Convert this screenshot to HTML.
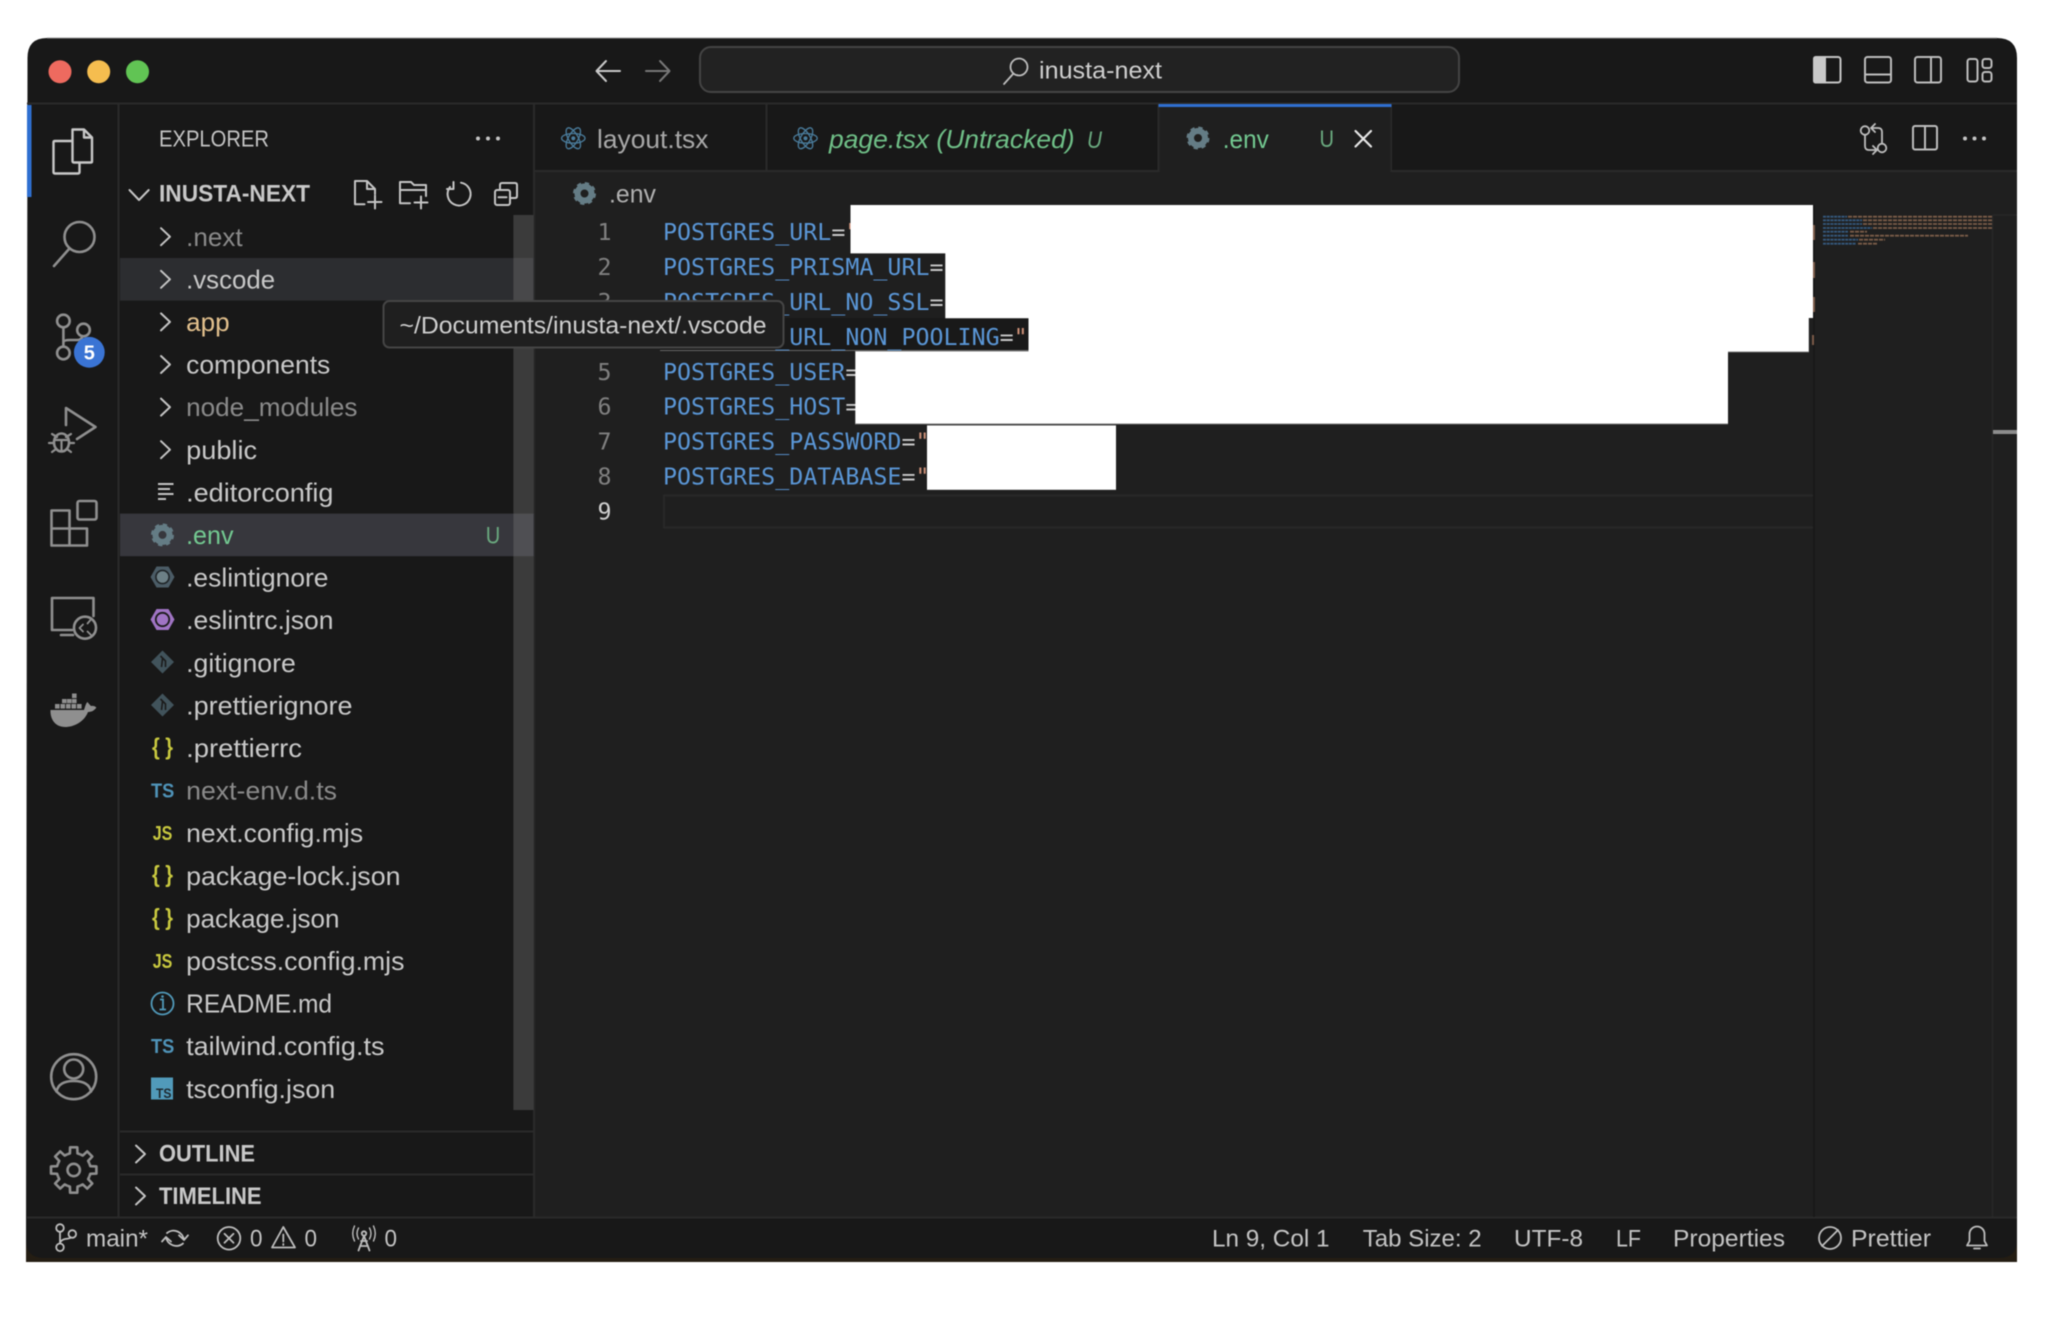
<!DOCTYPE html>
<html><head><meta charset="utf-8"><title>inusta-next</title>
<style>
html,body{margin:0;padding:0;background:#fff;width:2048px;height:1327px;overflow:hidden}
svg{display:block;filter:blur(.45px)}
text{font-family:"Liberation Sans",sans-serif;font-size:26px;fill:#c8c8c8}
.m{font-family:"DejaVu Sans Mono","Liberation Mono",monospace;font-size:23.3px;fill:#5a96d6}
.eq{fill:#c8c8c8}.q{fill:#ce9178}
.n{font-family:"DejaVu Sans Mono","Liberation Mono",monospace;font-size:23.3px;fill:#808080;text-anchor:end}
.d{fill:#8a8a8a}
.s{font-size:24.5px;fill:#c4c4c4}
.b{font-weight:700;font-size:24px;fill:#c8c8c8}
.ic{fill:none;stroke:#8f8f8f;stroke-width:2.6;stroke-linecap:round;stroke-linejoin:round}
.ib{fill:none;stroke:#c4c4c4;stroke-width:2;stroke-linecap:round;stroke-linejoin:round}
.ws{fill:none;stroke:#bdbdbd;stroke-width:1.8;stroke-linecap:round;stroke-linejoin:round}
.t{font-weight:700;font-size:20.5px;fill:#4f93b8}
.j{font-weight:700;font-size:20.5px;fill:#c8c83f}
.br{font-family:"Liberation Sans",sans-serif;font-weight:700;font-size:23px;fill:#c8c83f}
</style></head><body>
<svg width="2048" height="1327" viewBox="0 0 2048 1327" xmlns="http://www.w3.org/2000/svg">
<defs>
<g id="chev"><path d="M-4.5 -8.5L4.5 0L-4.5 8.5" fill="none" stroke="#c4c4c4" stroke-width="2" stroke-linecap="round" stroke-linejoin="round"/></g>
<g id="gear"><circle r="7" fill="none" stroke="#647c85" stroke-width="6"/><circle r="10" fill="none" stroke="#647c85" stroke-width="3" stroke-dasharray="4.2 3.65"/></g>
<g id="atom" fill="none" stroke="#4a7c9c" stroke-width="1.35"><ellipse rx="11.7" ry="4.8"/><ellipse rx="11.7" ry="4.8" transform="rotate(60)"/><ellipse rx="11.7" ry="4.8" transform="rotate(120)"/><circle r="1.4" fill="#4a7c9c"/></g>
<g id="diam"><path d="M0 -11.5L11.5 0L0 11.5L-11.5 0Z" fill="#41535b"/><path d="M-2 -6L3 -1V5M0 -3.4L-1 5" stroke="#1b1b1b" stroke-width="1.6" fill="none"/></g>
<g id="tooth"><path d="M-6.5 -15.7L-3.8 -16.6L-3.6 -22.7L3.6 -22.7L3.8 -16.6L6.5 -15.7" fill="none" stroke="#8f8f8f" stroke-width="2.6" stroke-linejoin="round"/></g>
<g id="brace"><text class="br" x="-10.5" y="6.5" textLength="21" lengthAdjust="spacingAndGlyphs">{ }</text></g>
</defs>

<rect width="2048" height="1327" fill="#fff"/>
<rect x="26" y="1235" width="1991" height="27" fill="#241d13"/>
<path d="M27.5 58Q27.5 38 47 38H1997Q2017 38 2017 58V1240Q2017 1258 1999 1258H44Q26 1258 26 1240Z" fill="#181818"/>
<path d="M47 38H1997" stroke="#9a9a9a" stroke-width="1"/>

<rect x="535" y="172" width="1482" height="1045" fill="#1f1f1f"/>

<path d="M27 103.5H2017M118.5 104V1217M534 104V1217M27 1217.5H2017" stroke="#2a2a2a" stroke-width="2" fill="none"/>
<path d="M535 171H1158M1391 171H2017" stroke="#2a2a2a" stroke-width="2"/>
<path d="M766.5 104V171M1158.5 104V172M1391 104V172" stroke="#2a2a2a" stroke-width="2"/>

<circle cx="60" cy="71.7" r="11.5" fill="#ee6a5f"/>
<circle cx="98.7" cy="71.7" r="11.5" fill="#f5bd4f"/>
<circle cx="137.5" cy="71.7" r="11.5" fill="#61c454"/>

<path d="M620 71H597M606 61L596.5 71L606 81" fill="none" stroke="#c8c8c8" stroke-width="2" stroke-linecap="round" stroke-linejoin="round"/>
<path d="M646 71H669M660 61L669.5 71L660 81" fill="none" stroke="#777" stroke-width="2" stroke-linecap="round" stroke-linejoin="round"/>

<rect x="700" y="47" width="759" height="45" rx="11" fill="#222" stroke="#444" stroke-width="2"/>
<circle cx="1019" cy="67" r="8.5" fill="none" stroke="#bdbdbd" stroke-width="1.8"/>
<path d="M1013 74L1004 84" stroke="#bdbdbd" stroke-width="1.8" stroke-linecap="round"/>
<text class="s" x="1039" y="78.5" textLength="123" lengthAdjust="spacingAndGlyphs" style="fill:#cfcfcf">inusta-next</text>

<rect x="1814" y="57" width="26.5" height="25.5" rx="2.5" fill="none" stroke="#c4c4c4" stroke-width="2"/>
<path d="M1816 56H1826V83.5H1816Q1813 83.5 1813 80.5V59Q1813 56 1816 56Z" fill="#c8c8c8"/>
<rect x="1865" y="57" width="26" height="25.5" rx="2.5" fill="none" stroke="#bdbdbd" stroke-width="2"/>
<path d="M1865 74.5H1891" stroke="#bdbdbd" stroke-width="2"/>
<rect x="1915" y="57" width="26" height="25.5" rx="2.5" fill="none" stroke="#bdbdbd" stroke-width="2"/>
<path d="M1931 57V82.5" stroke="#bdbdbd" stroke-width="2"/>
<rect x="1967.5" y="59" width="10" height="22.5" rx="2.5" fill="none" stroke="#bdbdbd" stroke-width="2"/>
<rect x="1982.5" y="59" width="9" height="9" rx="2.5" fill="none" stroke="#bdbdbd" stroke-width="2"/>
<rect x="1982.5" y="72" width="9" height="9.5" rx="2.5" fill="none" stroke="#bdbdbd" stroke-width="2"/>

<rect x="27" y="105" width="4.5" height="92" fill="#2f6fd0"/>
<path d="M72.5 129.5H84L92 137.5V161.5Q92 162.5 91 162.5H74Q72.5 162.5 72.5 161V129.5ZM84 129.5V137.5H92" fill="none" stroke="#c8c8c8" stroke-width="2.4" stroke-linejoin="round"/>
<path d="M72.5 141H55Q53.5 141 53.5 142.5V172Q53.5 173.5 55 173.5H78Q79.5 173.5 79.5 172V162.5" fill="none" stroke="#c8c8c8" stroke-width="2.4" stroke-linejoin="round"/>
<circle cx="79.5" cy="237" r="15" class="ic"/>
<path d="M69 249L54 266" class="ic"/>
<circle cx="63.4" cy="321" r="6.3" class="ic"/>
<circle cx="83.5" cy="330" r="6.3" class="ic"/>
<circle cx="63.4" cy="353" r="6.3" class="ic"/>
<path d="M63.4 327.5V346.5M63.4 342Q64 340 70 340H78Q81 340 82.5 336.5" class="ic"/>
<circle cx="89.3" cy="352.3" r="15.4" fill="#3a74d4"/>
<text x="89.3" y="359.5" text-anchor="middle" style="font-size:20px;font-weight:700;fill:#fff">5</text>
<path d="M66 425V408L95.5 427L77 439" class="ic"/>
<ellipse cx="61.5" cy="442.5" rx="7.5" ry="9" class="ic"/>
<path d="M52 434L57 437M71 434L66 437M49 443H54M74 443H69M52 452L56 449M71 452L67 449M54.5 440H68.5M61.5 440V451" class="ic" style="stroke-width:2.2"/>
<path d="M51.5 528.5H69.5V545.5H51.5V510.5H69.5V528.5H87V545.5H69.5" class="ic"/>
<rect x="77.5" y="501" width="19" height="18.5" rx="2" class="ic"/>
<path d="M72 630H52V598H93.5V616" class="ic"/>
<path d="M61 635H73" class="ic"/>
<circle cx="85" cy="627.7" r="11" class="ic"/>
<path d="M83 624.5L79.5 628L83 631.5M87.5 623.5L90.5 620M87.5 631.5L91 635" class="ic" style="stroke-width:1.8"/>
<g fill="#8f8f8f">
<path d="M50.5 710H84C85 707 86 703 87.5 702C89 704 90 705 91 706C93 705.5 95 706 96.4 707.5C94 711 91 712 88 712C84 722 74 727 65 727C56 727 50 720 50.5 710Z"/>
<rect x="72" y="693.5" width="4.6" height="4.6"/>
<rect x="62" y="699" width="4.6" height="4.2"/><rect x="67" y="699" width="4.6" height="4.2"/><rect x="72" y="699" width="4.6" height="4.2"/>
<rect x="55" y="704" width="4.6" height="4.6"/><rect x="60.5" y="704" width="4.6" height="4.6"/><rect x="66" y="704" width="4.6" height="4.6"/><rect x="71.5" y="704" width="4.6" height="4.6"/><rect x="77" y="704" width="4.6" height="4.6"/>
</g>
<circle cx="73.7" cy="1076.7" r="22.5" class="ic"/>
<circle cx="73.7" cy="1069" r="9.5" class="ic"/>
<path d="M56.5 1091.5C58 1084 64 1081 73.7 1081C83.5 1081 89.5 1084 91 1091.5" class="ic"/>
<g transform="translate(73.7 1170)">
<use href="#tooth"/><use href="#tooth" transform="rotate(45)"/><use href="#tooth" transform="rotate(90)"/><use href="#tooth" transform="rotate(135)"/><use href="#tooth" transform="rotate(180)"/><use href="#tooth" transform="rotate(225)"/><use href="#tooth" transform="rotate(270)"/><use href="#tooth" transform="rotate(315)"/>
<circle r="6.2" class="ic"/>
</g>

<text x="159" y="146.7" textLength="110" lengthAdjust="spacingAndGlyphs" style="font-size:23.5px;fill:#c4c4c4">EXPLORER</text>
<g fill="#c4c4c4"><circle cx="478" cy="138.5" r="2"/><circle cx="488" cy="138.5" r="2"/><circle cx="498" cy="138.5" r="2"/></g>
<path d="M129.5 190L139 200L148.7 190" fill="none" stroke="#c4c4c4" stroke-width="2" stroke-linecap="round" stroke-linejoin="round"/>
<text class="b" x="159" y="201.7" textLength="151" lengthAdjust="spacingAndGlyphs">INUSTA-NEXT</text>
<!-- new file -->
<path d="M364.5 204.3H355V181H367L375 189V194M367 181V189H375M375 195.5V208.5M368 202H381.5" class="ib"/>
<!-- new folder -->
<path d="M410 203.3H400V182H411L414 185H426V196M400 190H426M421 196.5V208.5M414.5 202.5H427.5" class="ib"/>
<!-- refresh -->
<path d="M461 182.7A11.5 11.5 0 1 1 450 187M453.5 182V189H447" class="ib"/>
<!-- collapse -->
<rect x="495" y="190" width="15" height="15" rx="2" class="ib"/>
<path d="M500 190V185Q500 183 502 183H515Q517 183 517 185V196Q517 198 515 198H510M498.5 197.3H506.5" class="ib"/>

<rect x="120" y="258" width="414" height="42.6" fill="#2c2d30"/>
<rect x="120" y="513.6" width="414" height="42.6" fill="#37373d"/>
<rect x="513.4" y="215" width="20" height="895" fill="#797979" opacity=".36"/>

<use href="#chev" x="165.5" y="236.7"/><use href="#chev" x="165.5" y="279.3"/><use href="#chev" x="165.5" y="321.9"/><use href="#chev" x="165.5" y="364.5"/><use href="#chev" x="165.5" y="407.1"/><use href="#chev" x="165.5" y="449.7"/>
<g transform="translate(-.5 .4)">
<text x="186.6" y="245.4" textLength="56.5" lengthAdjust="spacingAndGlyphs" class="d">.next</text>
<text x="186.6" y="288" textLength="89" lengthAdjust="spacingAndGlyphs">.vscode</text>
<text x="186.6" y="330.6" textLength="43.5" lengthAdjust="spacingAndGlyphs" style="fill:#e2c08d">app</text>
<text x="186.6" y="373.2" textLength="144.2" lengthAdjust="spacingAndGlyphs">components</text>
<text x="186.6" y="415.8" textLength="171.4" lengthAdjust="spacingAndGlyphs" class="d">node_modules</text>
<text x="186.6" y="458.4" textLength="71" lengthAdjust="spacingAndGlyphs">public</text>
<text x="186.6" y="501" textLength="147.4" lengthAdjust="spacingAndGlyphs">.editorconfig</text>
<text x="186.6" y="543.6" textLength="47.4" lengthAdjust="spacingAndGlyphs" style="fill:#73c991">.env</text>
<text x="186.6" y="586.2" textLength="142.4" lengthAdjust="spacingAndGlyphs">.eslintignore</text>
<text x="186.6" y="628.8" textLength="147.4" lengthAdjust="spacingAndGlyphs">.eslintrc.json</text>
<text x="186.6" y="671.4" textLength="109.8" lengthAdjust="spacingAndGlyphs">.gitignore</text>
<text x="186.6" y="714" textLength="166.4" lengthAdjust="spacingAndGlyphs">.prettierignore</text>
<text x="186.6" y="756.6" textLength="115.9" lengthAdjust="spacingAndGlyphs">.prettierrc</text>
<text x="186.6" y="799.2" textLength="150.9" lengthAdjust="spacingAndGlyphs" class="d">next-env.d.ts</text>
<text x="186.6" y="841.8" textLength="177" lengthAdjust="spacingAndGlyphs">next.config.mjs</text>
<text x="186.6" y="884.4" textLength="214.4" lengthAdjust="spacingAndGlyphs">package-lock.json</text>
<text x="186.6" y="927" textLength="153.4" lengthAdjust="spacingAndGlyphs">package.json</text>
<text x="186.6" y="969.6" textLength="218.4" lengthAdjust="spacingAndGlyphs">postcss.config.mjs</text>
<text x="186.6" y="1012.2" textLength="146" lengthAdjust="spacingAndGlyphs">README.md</text>
<text x="186.6" y="1054.8" textLength="198.4" lengthAdjust="spacingAndGlyphs">tailwind.config.ts</text>
<text x="186.6" y="1097.4" textLength="149.1" lengthAdjust="spacingAndGlyphs">tsconfig.json</text>
</g>
<path d="M158 484H173.5M158 489H170M158 494H173.5M158 499H166" stroke="#c4c4c4" stroke-width="2"/>
<use href="#gear" x="162.5" y="534.9"/>
<text x="485.7" y="543.6" textLength="14.5" lengthAdjust="spacingAndGlyphs" style="fill:#6aa97f;font-size:24px">U</text>
<path d="M150.5 577L156.5 566.5H168.5L174.5 577L168.5 587.5H156.5Z" fill="#4b5c66"/><circle cx="162.5" cy="577" r="7.4" fill="#1f2427"/><circle cx="162.5" cy="577" r="5.8" fill="#6d8086"/>
<path d="M150.5 619.5L156.5 609H168.5L174.5 619.5L168.5 630H156.5Z" fill="#a074c4"/><circle cx="162.5" cy="619.5" r="7.6" fill="#1b1b1b"/><circle cx="162.5" cy="619.5" r="5.8" fill="#a074c4"/>
<use href="#diam" x="162.5" y="662"/>
<use href="#diam" x="162.5" y="705"/>
<use href="#brace" x="162.5" y="747.9"/>
<text class="t" x="151" y="797.3" textLength="23.3" lengthAdjust="spacingAndGlyphs">TS</text>
<text class="j" x="152.7" y="840" textLength="19.6" lengthAdjust="spacingAndGlyphs">JS</text>
<use href="#brace" x="162.5" y="875.7"/>
<use href="#brace" x="162.5" y="918.3"/>
<text class="j" x="152.7" y="968" textLength="19.6" lengthAdjust="spacingAndGlyphs">JS</text>
<circle cx="162.5" cy="1003.5" r="11" fill="none" stroke="#519aba" stroke-width="1.8"/>
<path d="M160 999.5H163V1009.5M159.5 1009.5H166" fill="none" stroke="#519aba" stroke-width="1.8"/><circle cx="162.5" cy="996.5" r="1.3" fill="#519aba"/>
<text class="t" x="151" y="1052.8" textLength="23.3" lengthAdjust="spacingAndGlyphs">TS</text>
<rect x="151" y="1077.5" width="22" height="22" fill="#519aba"/>
<text x="156" y="1098" textLength="15.5" lengthAdjust="spacingAndGlyphs" style="font-size:14px;font-weight:700;fill:#1f2a30">TS</text>

<path d="M120 1131.5H534M120 1174.5H534" stroke="#2a2a2a" stroke-width="2"/>
<use href="#chev" x="140.5" y="1154"/><use href="#chev" x="140.5" y="1196"/>
<text class="b" x="159" y="1161.7" textLength="96" lengthAdjust="spacingAndGlyphs">OUTLINE</text>
<text class="b" x="159" y="1204" textLength="102.6" lengthAdjust="spacingAndGlyphs">TIMELINE</text>

<rect x="1159.5" y="104" width="231" height="68" fill="#1f1f1f"/>
<rect x="1158.5" y="104" width="233" height="3" fill="#2f6fd0"/>
<use href="#atom" x="573.3" y="138.3"/>
<text x="597" y="148" textLength="111.4" lengthAdjust="spacingAndGlyphs" style="fill:#a8a8a8">layout.tsx</text>
<use href="#atom" x="805.5" y="138.3"/>
<text x="829" y="148" textLength="245.6" lengthAdjust="spacingAndGlyphs" style="fill:#6fbf87;font-style:italic">page.tsx (Untracked)</text>
<text x="1087" y="148" textLength="15" lengthAdjust="spacingAndGlyphs" style="fill:#6aa97f;font-style:italic;font-size:24px">U</text>
<use href="#gear" x="1198" y="138"/>
<text x="1222.8" y="148" textLength="46" lengthAdjust="spacingAndGlyphs" style="fill:#73c991">.env</text>
<text x="1319.5" y="147" textLength="14.5" lengthAdjust="spacingAndGlyphs" style="fill:#6aa97f;font-size:24px">U</text>
<path d="M1355.5 131L1371 146.5M1371 131L1355.5 146.5" stroke="#e6e6e6" stroke-width="2.2" stroke-linecap="round"/>

<circle cx="1865" cy="130.5" r="4.3" class="ws"/>
<circle cx="1882" cy="148" r="4.3" class="ws"/>
<path d="M1865 135V146Q1865 150 1869 150H1876M1873 146L1877 150L1873 154M1882 143.5V132Q1882 128 1878 128H1871M1875 124L1871 128L1875 132" class="ws"/>
<rect x="1913" y="126" width="24" height="23.5" rx="2" class="ws" style="stroke-width:2"/>
<path d="M1925 126V149.5" class="ws" style="stroke-width:2"/>
<g fill="#c4c4c4"><circle cx="1965" cy="138.5" r="2"/><circle cx="1974.5" cy="138.5" r="2"/><circle cx="1984" cy="138.5" r="2"/></g>

<use href="#gear" x="584.5" y="193.5"/>
<text x="609" y="202.5" textLength="47" lengthAdjust="spacingAndGlyphs" style="font-size:25px;fill:#b0b0b0">.env</text>

<rect x="660" y="318" width="370" height="33" fill="#191919"/>
<rect x="660" y="350" width="370" height="1" fill="#666"/>

<rect x="664" y="495.5" width="1150" height="32" fill="none" stroke="#282828" stroke-width="2"/>

<g>
<text class="n" x="611.5" y="240.2">1</text>
<text class="n" x="611.5" y="275.1">2</text>
<text class="n" x="611.5" y="310">3</text>
<text class="n" x="611.5" y="344.9">4</text>
<text class="n" x="611.5" y="379.8">5</text>
<text class="n" x="611.5" y="414.7">6</text>
<text class="n" x="611.5" y="449.6">7</text>
<text class="n" x="611.5" y="484.5">8</text>
<text class="n" x="611.5" y="519.4" style="fill:#cfcfcf">9</text>
<text class="m" x="663" y="240.2">POSTGRES_URL<tspan class="eq">=</tspan><tspan class="q">"</tspan></text>
<text class="m" x="663" y="275.1">POSTGRES_PRISMA_URL<tspan class="eq">=</tspan><tspan class="q">"</tspan></text>
<text class="m" x="663" y="310">POSTGRES_URL_NO_SSL<tspan class="eq">=</tspan><tspan class="q">"</tspan></text>
<text class="m" x="663" y="344.9">POSTGRES_URL_NON_POOLING<tspan class="eq">=</tspan><tspan class="q">"</tspan></text>
<text class="m" x="663" y="379.8">POSTGRES_USER<tspan class="eq">=</tspan></text>
<text class="m" x="663" y="414.7">POSTGRES_HOST<tspan class="eq">=</tspan></text>
<text class="m" x="663" y="449.6">POSTGRES_PASSWORD<tspan class="eq">=</tspan><tspan class="q">"</tspan></text>
<text class="m" x="663" y="484.5">POSTGRES_DATABASE<tspan class="eq">=</tspan><tspan class="q">"</tspan></text>
</g>

<path d="M850.5 205H1813V318H1808.8V351.5H1028.5V318.2H945.3V253.4H850.5Z" fill="#fff"/>
<rect x="855.3" y="351" width="872.7" height="72.8" fill="#fff"/>
<rect x="927" y="425.4" width="189" height="64.4" fill="#fff"/>
<path d="M1028.5 351H855M1728 424H855M1809 352H1728" stroke="#777" stroke-width="1"/>

<!-- minimap -->
<rect x="1813" y="205" width="2" height="1012" fill="#191919"/>
<path d="M1814 225V240M1814 262V278M1814 297V312M1813 335V345" stroke="#7a5a48" stroke-width="2"/>
<path d="M1992.5 215V1217" stroke="#2a2a2a" stroke-width="1"/>
<path d="M1993 215H2017" stroke="#2a2a2a" stroke-width="1"/>
<rect x="1993" y="430" width="24" height="4" fill="#8c8c8c"/>
<g stroke="#35597e" stroke-width="1.8" stroke-dasharray="3 .7">
<path d="M1823 216.7H1847M1823 220.3H1862M1823 224H1862M1823 228H1872M1823 231.7H1848M1823 235.7H1848M1823 239.7H1858M1823 243.7H1856"/>
</g>
<g stroke="#7a5c48" stroke-width="1.8" stroke-dasharray="4 1">
<path d="M1848 216.7H1992M1863 220.3H1992M1863 224H1992M1873 228H1992M1850 231.7H1867M1850 235.7H1968M1859 239.7H1885M1858 243.7H1877"/>
</g>

<rect x="383.5" y="301" width="400" height="46.5" rx="6" fill="#1f1f1f" stroke="#454545" stroke-width="2"/>
<text x="399.5" y="333.4" textLength="367" lengthAdjust="spacingAndGlyphs" style="font-size:24.5px;fill:#cfcfcf">~/Documents/inusta-next/.vscode</text>

<!-- status left -->
<circle cx="60" cy="1228" r="3.8" class="ws"/><circle cx="60" cy="1247.3" r="3.8" class="ws"/><circle cx="72.3" cy="1234" r="3.8" class="ws"/>
<path d="M60 1232V1243.5M60 1243Q61 1240 65 1239Q70 1238.5 71 1237.5" class="ws"/>
<text class="s" x="86" y="1246.7" textLength="62" lengthAdjust="spacingAndGlyphs">main*</text>
<path d="M167 1233A10.5 10.5 0 0 1 184 1240M183 1243.5A10.5 10.5 0 0 1 166 1237M179 1235.3L184 1240L188 1235.3M162 1241.5L166 1237L171 1241.5" class="ws"/>
<circle cx="229" cy="1238.3" r="11.3" class="ws"/>
<path d="M224.5 1233.8L233.5 1242.8M233.5 1233.8L224.5 1242.8" class="ws"/>
<text class="s" x="250" y="1246.7" textLength="12.5" lengthAdjust="spacingAndGlyphs">0</text>
<path d="M283.3 1227L295 1247.5H272ZM283.3 1234.5V1241.5M283.3 1244V1245" class="ws"/>
<text class="s" x="304.5" y="1246.7" textLength="12.5" lengthAdjust="spacingAndGlyphs">0</text>
<path d="M364 1236L358.5 1250.5M364 1236L369.5 1250.5M360 1246H368M361 1241H367" class="ws"/>
<circle cx="364" cy="1233.5" r="2.2" class="ws"/>
<path d="M358.5 1228Q355.5 1233.5 358.5 1239M369.5 1228Q372.5 1233.5 369.5 1239M354.5 1226Q351 1233.5 354.5 1241M373.5 1226Q377 1233.5 373.5 1241" class="ws" style="stroke-width:1.4"/>
<text class="s" x="384.5" y="1246.7" textLength="12.5" lengthAdjust="spacingAndGlyphs">0</text>

<!-- status right -->
<text class="s" x="1212" y="1246.7" textLength="117.5" lengthAdjust="spacingAndGlyphs">Ln 9, Col 1</text>
<text class="s" x="1362.7" y="1246.7" textLength="119" lengthAdjust="spacingAndGlyphs">Tab Size: 2</text>
<text class="s" x="1514" y="1246.7" textLength="69" lengthAdjust="spacingAndGlyphs">UTF-8</text>
<text class="s" x="1616" y="1246.7" textLength="25" lengthAdjust="spacingAndGlyphs">LF</text>
<text class="s" x="1673" y="1246.7" textLength="112" lengthAdjust="spacingAndGlyphs">Properties</text>
<circle cx="1830" cy="1238" r="11" class="ws"/>
<path d="M1822 1246L1838 1230" class="ws"/>
<text class="s" x="1851" y="1246.7" textLength="80" lengthAdjust="spacingAndGlyphs">Prettier</text>
<path d="M1967 1245.5H1987L1984.5 1241V1234A7.5 7.5 0 0 0 1969.5 1234V1241ZM1974 1248.5H1980" class="ws"/>
</svg>
</body></html>
